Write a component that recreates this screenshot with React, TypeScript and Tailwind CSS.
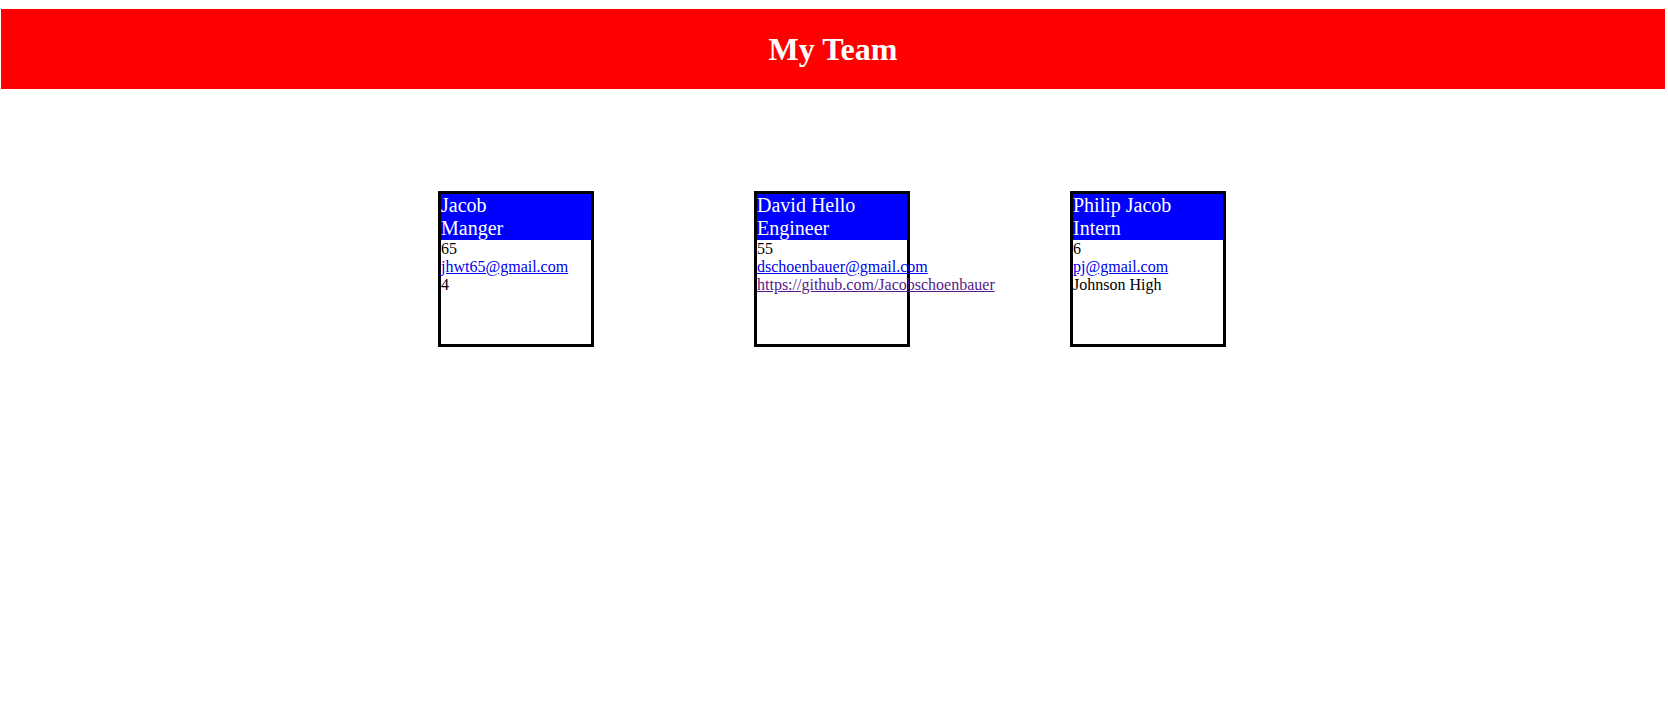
const team = [
  {
    name: "Jacob",
    role: "Manger",
    id: "65",
    email: "jhwt65@gmail.com",
    extra: { text: "4" },
  },
  {
    name: "David Hello",
    role: "Engineer",
    id: "55",
    email: "dschoenbauer@gmail.com",
    extra: { text: "https://github.com/Jacobschoenbauer", link: true },
  },
  {
    name: "Philip Jacob",
    role: "Intern",
    id: "6",
    email: "pj@gmail.com",
    extra: { text: "Johnson High" },
  },
];

export default function App() {
  return (
    <div className="min-h-[715px] bg-white font-['Liberation_Serif',serif] text-black">
      {/* Header */}
      <header className="mt-[9px] ml-[1px] mr-[3px] h-[80px] bg-[#ff0000] flex items-center justify-center">
        <h1 className="text-[32px] font-bold text-white leading-[normal]">My Team</h1>
      </header>

      {/* Cards */}
      <main className="mt-[102px] flex justify-center gap-[160px] pr-[4px]">
        {team.map((m) => (
          <div key={m.name} className="w-[156px] h-[156px] border-[3px] border-black shrink-0">
            <div className="bg-[#0000ff] text-white text-[20px] leading-[normal]">
              <div>{m.name}</div>
              <div>{m.role}</div>
            </div>
            <div className="text-[16px] leading-[normal]">
              <div>{m.id}</div>
              <div className="whitespace-nowrap">
                <a href="#" className="text-[#0000ee] underline">
                  {m.email}
                </a>
              </div>
              <div className="whitespace-nowrap">
                {m.extra.link ? (
                  <a href="#" className="text-[#551a8b] underline">
                    {m.extra.text}
                  </a>
                ) : (
                  m.extra.text
                )}
              </div>
            </div>
          </div>
        ))}
      </main>
    </div>
  );
}
